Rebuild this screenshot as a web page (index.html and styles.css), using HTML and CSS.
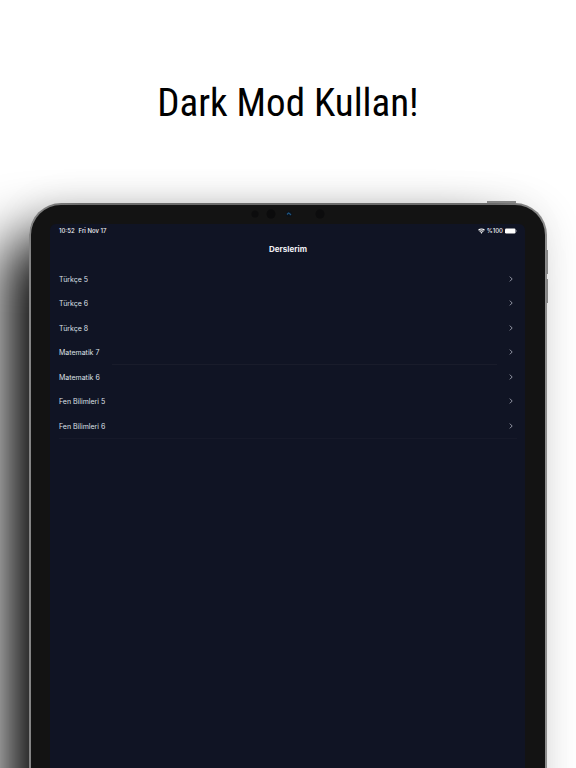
FILE: index.html
```
<!DOCTYPE html>
<html lang="tr">
<head>
<meta charset="utf-8">
<meta name="viewport" content="width=device-width, initial-scale=1">
<title>Dark Mod Kullan!</title>
<link rel="stylesheet" href="styles.css">
</head>
<body>
<main class="promo">
  <h1 class="headline">Dark Mod Kullan!</h1>
  <div class="tablet">
    <span class="key key-power"></span>
    <span class="key key-up"></span>
    <span class="key key-down"></span>
    <div class="bezel">
      <svg class="sensors" width="80" height="12" viewBox="0 0 80 12" aria-hidden="true">
        <circle cx="7" cy="6" r="3.5" fill="#0c0c0d"/>
        <circle cx="23" cy="6" r="4.5" fill="#0b0b0c"/>
        <circle cx="41" cy="6" r="3" fill="#0d1218"/>
        <path d="M39 6.500l1.500-1.500 1 .5 1.500 1.500" fill="none" stroke="#1d5480" stroke-width="1.200"/>
        <circle cx="72" cy="6" r="4.500" fill="#0c0c0d"/>
      </svg>
      <div class="screen">
        <div class="status">
          <span>10:52</span>
          <span class="date">Fri Nov 17</span>
          <svg class="wifi" width="7" height="6" viewBox="0 0 14 12" aria-hidden="true">
            <path d="M1 4.500a8.500 8.500 0 0 1 12 0M3.300 7a5.200 5.200 0 0 1 7.400 0" fill="none" stroke="#fff" stroke-width="2.400"/>
            <path d="M4.800 8.800a3.200 3.200 0 0 1 4.400 0L7 11.500z" fill="#fff"/>
          </svg>
          <span>%100</span>
          <svg class="battery" width="12" height="6" viewBox="0 0 12 6" aria-hidden="true">
            <rect x="0" y=".5" width="10.500" height="5" rx="1.200" fill="#fff"/>
            <path d="M11.200 2.200v1.600" stroke="#9a9cab" stroke-width=".8"/>
          </svg>
        </div>
        <h2 class="title">Derslerim</h2>
        <ul class="lessons">
          <li><a class="lesson" href="#">Türkçe 5<svg class="chevron" viewBox="0 0 4 6"><path d="M.8.6 3.200 3 .8 5.400"/></svg></a></li>
          <li><a class="lesson" href="#">Türkçe 6<svg class="chevron" viewBox="0 0 4 6"><path d="M.8.6 3.200 3 .8 5.400"/></svg></a></li>
          <li><a class="lesson" href="#">Türkçe 8<svg class="chevron" viewBox="0 0 4 6"><path d="M.8.6 3.200 3 .8 5.400"/></svg></a></li>
          <li class="divided"><a class="lesson" href="#">Matematik 7<svg class="chevron" viewBox="0 0 4 6"><path d="M.8.6 3.200 3 .8 5.400"/></svg></a></li>
          <li><a class="lesson" href="#">Matematik 6<svg class="chevron" viewBox="0 0 4 6"><path d="M.8.6 3.200 3 .8 5.400"/></svg></a></li>
          <li><a class="lesson" href="#">Fen Bilimleri 5<svg class="chevron" viewBox="0 0 4 6"><path d="M.8.6 3.200 3 .8 5.400"/></svg></a></li>
          <li class="last"><a class="lesson" href="#">Fen Bilimleri 6<svg class="chevron" viewBox="0 0 4 6"><path d="M.8.6 3.200 3 .8 5.400"/></svg></a></li>
        </ul>
      </div>
    </div>
  </div>
</main>
</body>
</html>
```
FILE: styles.css
```
* {
  box-sizing: border-box;
}

body {
  margin: 0;
  background: #fff;
  font-family: Inter, "Noto Sans", sans-serif;
}

.promo {
  display: flex;
  flex-direction: column;
  height: 100vh;
  overflow: hidden;
}

.headline {
  margin: 0;
  padding: 79px 0 76px;
  font: 400 39px/48px "Roboto Condensed", "Liberation Sans Narrow", Roboto, sans-serif;
  text-align: center;
  color: #000;
}

/* The device runs past the bottom edge so its shadow never fades out there. */
.tablet {
  position: relative;
  flex: 1;
  display: flex;
  margin: 0 29px -80px;
  padding: 2px 2px 0;
  border-radius: 32px 32px 0 0;
  background: linear-gradient(90deg, #858585, #6c6c6c 10%, #6c6c6c 90%, #8e8e8e);
  box-shadow: 0 4px 40px rgba(0, 0, 0, 0.12), -38px 24px 60px -14px #000;
}

.key {
  position: absolute;
  background: #858585;
}

.key-power {
  top: -2px;
  right: 31px;
  width: 29px;
  height: 2px;
}

.key-up,
.key-down {
  right: -1px;
  width: 2px;
  height: 24px;
}

.key-up {
  top: 47px;
}

.key-down {
  top: 76px;
}

.bezel {
  flex: 1;
  display: flex;
  flex-direction: column;
  padding: 3px 20px 0 19px;
  border-radius: 30px 30px 0 0;
  background: #131313;
}

.sensors {
  align-self: center;
  margin-bottom: 4px;
}

.screen {
  flex: 1;
  padding: 0 8px 0 9px;
  border-radius: 6px 6px 0 0;
  background: #101424;
  color: #dfe0e8;
}

.status {
  display: flex;
  align-items: center;
  height: 13px;
  gap: 2px;
  font-size: 6px;
  font-weight: 500;
  color: #f2f2f6;
}

.date {
  margin-left: 2px;
  margin-right: auto;
}

.title {
  margin: 0;
  padding-top: 4px;
  font-size: 8px;
  line-height: 16px;
  font-weight: 700;
  text-align: center;
  color: #f0f0f5;
}

.lessons {
  margin: 0;
  padding: 10px 0 0;
  list-style: none;
}

.lessons li:nth-child(even)::after,
.last::after {
  content: "";
  display: block;
  height: 1px;
}

.lessons .divided::after {
  margin: 0 20px 0 53px;
  background: #191c2b;
}

.last::after {
  background: #161929;
}

.lesson {
  display: flex;
  align-items: center;
  justify-content: space-between;
  padding-right: 4px;
  height: 24px;
  font-size: 7px;
  color: inherit;
  text-decoration: none;
}

.chevron {
  width: 4px;
  height: 6px;
  fill: none;
  stroke: #a2a4b2;
  stroke-width: 0.9;
}
```
